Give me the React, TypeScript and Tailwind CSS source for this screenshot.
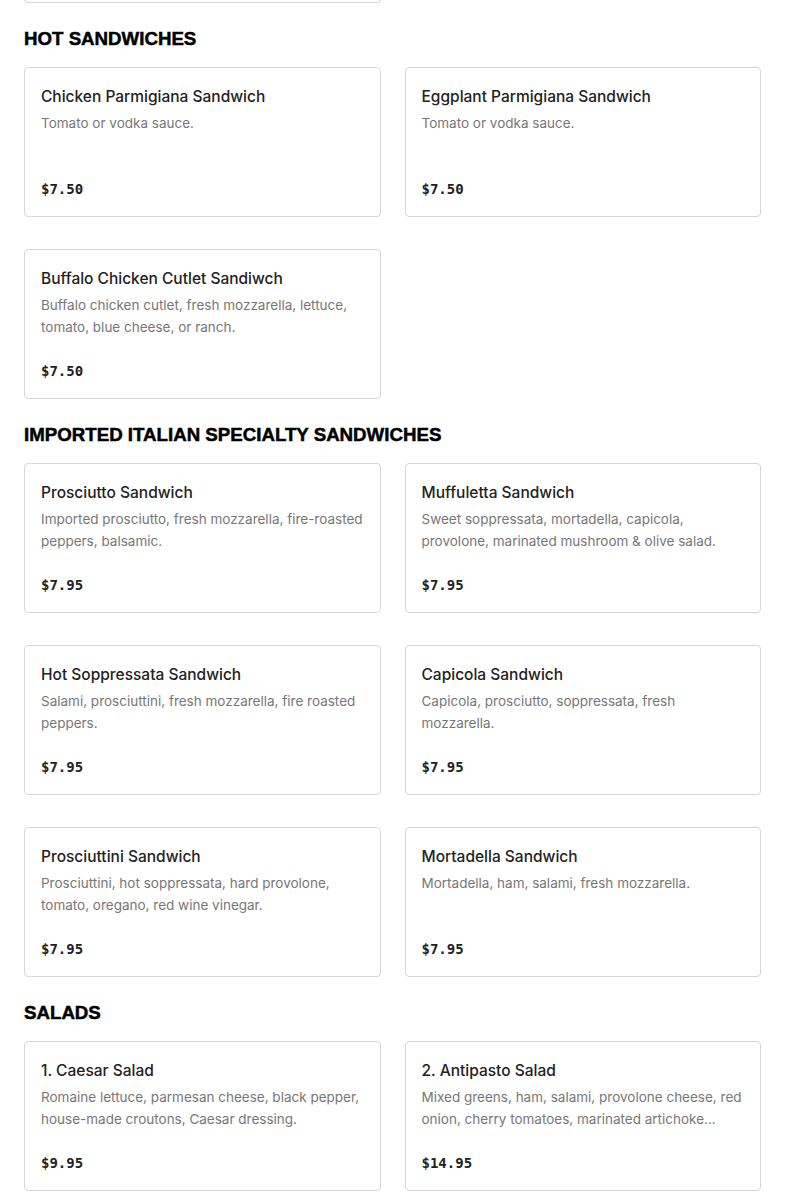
type Item = { name: string; desc: string; price: string };

const sections: { title: string; items: Item[] }[] = [
  {
    title: 'HOT SANDWICHES',
    items: [
      { name: 'Chicken Parmigiana Sandwich', desc: 'Tomato or vodka sauce.', price: '$7.50' },
      { name: 'Eggplant Parmigiana Sandwich', desc: 'Tomato or vodka sauce.', price: '$7.50' },
      {
        name: 'Buffalo Chicken Cutlet Sandiwch',
        desc: 'Buffalo chicken cutlet, fresh mozzarella, lettuce, tomato, blue cheese, or ranch.',
        price: '$7.50',
      },
    ],
  },
  {
    title: 'IMPORTED ITALIAN SPECIALTY SANDWICHES',
    items: [
      {
        name: 'Prosciutto Sandwich',
        desc: 'Imported prosciutto, fresh mozzarella, fire-roasted peppers, balsamic.',
        price: '$7.95',
      },
      {
        name: 'Muffuletta Sandwich',
        desc: 'Sweet soppressata, mortadella, capicola, provolone, marinated mushroom & olive salad.',
        price: '$7.95',
      },
      {
        name: 'Hot Soppressata Sandwich',
        desc: 'Salami, prosciuttini, fresh mozzarella, fire roasted peppers.',
        price: '$7.95',
      },
      {
        name: 'Capicola Sandwich',
        desc: 'Capicola, prosciutto, soppressata, fresh mozzarella.',
        price: '$7.95',
      },
      {
        name: 'Prosciuttini Sandwich',
        desc: 'Prosciuttini, hot soppressata, hard provolone, tomato, oregano, red wine vinegar.',
        price: '$7.95',
      },
      {
        name: 'Mortadella Sandwich',
        desc: 'Mortadella, ham, salami, fresh mozzarella.',
        price: '$7.95',
      },
    ],
  },
  {
    title: 'SALADS',
    items: [
      {
        name: '1. Caesar Salad',
        desc: 'Romaine lettuce, parmesan cheese, black pepper, house-made croutons, Caesar dressing.',
        price: '$9.95',
      },
      {
        name: '2. Antipasto Salad',
        desc: 'Mixed greens, ham, salami, provolone cheese, red onion, cherry tomatoes, marinated artichoke...',
        price: '$14.95',
      },
    ],
  },
];

function MenuCard({ item }: { item: Item }) {
  return (
    <div className="h-[150px] flex flex-col border border-[#d6d6d6] rounded-[4px] bg-white px-4 pt-[17px] pb-[15px]">
      <h3 className="text-[15.5px] leading-6 font-medium text-[#222]">{item.name}</h3>
      <p className="mt-[3px] text-[13.5px] leading-[22px] text-[#777]">{item.desc}</p>
      <div className="mt-auto text-[14px] leading-6 font-bold text-[#222] font-['DejaVu_Sans_Mono',monospace]">
        {item.price}
      </div>
    </div>
  );
}

export default function App() {
  return (
    <div className="min-h-screen bg-white px-6 font-['Inter',sans-serif] overflow-hidden">
      <div className="h-[4px] w-[357px] -mt-px border border-t-0 border-[#d6d6d6] rounded-b-[4px]" />
      {sections.map((section) => (
        <section key={section.title} className="mt-6">
          <h2 className="text-[18.7px] leading-6 font-black text-black font-['Liberation_Sans',sans-serif] [-webkit-text-stroke:0.5px_black] mb-4">
            {section.title}
          </h2>
          <div className="grid grid-cols-2 gap-x-6 gap-y-8">
            {section.items.map((item) => (
              <MenuCard key={item.name} item={item} />
            ))}
          </div>
        </section>
      ))}
    </div>
  );
}
